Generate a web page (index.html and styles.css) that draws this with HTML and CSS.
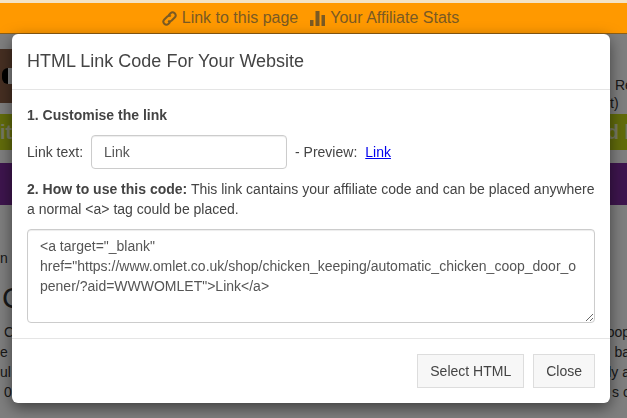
FILE: index.html
```html
<!DOCTYPE html>
<html lang="en">
<head>
	<meta charset="UTF-8">
	<title>HTML Link Code</title>
	<link rel="stylesheet" href="styles.css">
</head>
<body>
	<div class="page">
		<div class="topbar">
			<span class="toplink">
				<svg class="icon" width="17" height="17" viewBox="0 0 17 17"><path d="M7.500 5.500l2-2.200a3 3 0 0 1 4.200 0a3 3 0 0 1 0 4.200l-3 3a3 3 0 0 1-3.600.3M9.500 11.500l-2 2.200a3 3 0 0 1-4.200 0a3 3 0 0 1 0-4.200l3-3a3 3 0 0 1 3.600-.3" fill="none" stroke="currentColor" stroke-width="2"/></svg>
				Link to this page
			</span>
			<span class="toplink">
				<svg class="icon" width="16" height="15" viewBox="0 0 16 15"><path d="M0 9h3.500v6H0zM5.500 0h4v15h-4zM11.500 4H15v11h-3.500z" fill="currentColor"/></svg>
				Your Affiliate Stats
			</span>
		</div>
		<div class="head">
			<div class="logo"><div class="eye"></div></div>
			<div class="headtext"><span class="re">Re</span><br>t)</div>
		</div>
		<div class="band green"><span>it</span><span class="clip">d l</span></div>
		<div class="band purple"></div>
		<div class="crumb">n</div>
		<div class="bigtitle">C</div>
		<div class="copy">
			<p><span>&nbsp;C</span><span class="clip">oop</span></p>
			<p><span>e</span><span class="clip">ba</span></p>
			<p><span>ul</span><span class="clip">ly a</span></p>
			<p><span>&nbsp;0</span><span class="clip">s c</span></p>
		</div>
	</div>
	<div class="backdrop"></div>
	<div class="modal">
		<div class="modal-header">HTML Link Code For Your Website</div>
		<div class="modal-body">
			<p class="step"><b>1. Customise the link</b></p>
			<div class="linkrow">
				<label>Link text:</label>
				<input class="textbox" type="text" value="Link">
				<span>- Preview:</span>
				<a href="#">Link</a>
			</div>
			<p class="howto"><b>2. How to use this code:</b> This link cantains your affiliate code and can be placed anywhere a normal &lt;a&gt; tag could be placed.</p>
			<textarea class="code">&lt;a target="_blank" href="https://www.omlet.co.uk/shop/chicken_keeping/automatic_chicken_coop_door_opener/?aid=WWWOMLET"&gt;Link&lt;/a&gt;</textarea>
		</div>
		<div class="modal-footer">
			<button class="btn">Select HTML</button>
			<button class="btn">Close</button>
		</div>
	</div>
</body>
</html>
```

FILE: styles.css
```css
* {
	margin: 0;
	padding: 0;
	box-sizing: border-box;
}
html,body {
	height: 100%;
	overflow: hidden;
}
body {
	background: #fff;
	color: #333;
	font-family: "Liberation Sans", Arial, sans-serif;
	font-size: 14px;
	line-height: 20px;
}
.topbar {
	position: relative;
	z-index: 2;
	display: flex;
	justify-content: center;
	gap: 12px;
	height: 34px;
	padding-right: 7px;
	background: #ff9900;
	border-top: 3px solid #f3e3c6;
	border-bottom: 1px solid #8f5f14;
	color: #7a5a24;
	font-size: 16px;
	line-height: 30px;
}
.toplink {
	display: flex;
	align-items: center;
	gap: 4px;
}
.head {
	display: flex;
	justify-content: space-between;
	height: 80px;
	padding-top: 15px;
}
.logo {
	display: flex;
	align-items: center;
	justify-content: flex-end;
	width: 13px;
	height: 54px;
	background: #8c5f44;
}
.eye {
	width: 11px;
	height: 16px;
	background: #000;
	border-right: 5px solid #fff;
	border-radius: 6px 0 0 6px;
}
.headtext {
	width: 17px;
	margin-top: 27px;
	line-height: 18px;
	white-space: nowrap;
}
.re {
	margin-left: 5px;
}
.band {
	display: flex;
	justify-content: space-between;
	color: rgba(255,255,255,.75);
	font-size: 20px;
	font-weight: bold;
}
.green {
	height: 36px;
	background: #c4d816;
	line-height: 36px;
}
.purple {
	height: 42px;
	margin-top: 13px;
	background: #7c2a9c;
}
.clip {
	margin-right: -3px;
}
.crumb {
	margin-top: 43px;
}
.bigtitle {
	margin-top: 13px;
	padding-left: 2px;
	font-size: 30px;
	line-height: 34px;
}
.copy {
	margin-top: 7px;
}
.copy p {
	display: flex;
	justify-content: space-between;
	height: 20px;
}
.backdrop {
	position: fixed;
	top: 0;
	right: 0;
	bottom: 0;
	left: 0;
	z-index: 1;
	background: rgba(0,0,0,.5);
}
.modal {
	position: fixed;
	top: 34px;
	left: 12px;
	z-index: 3;
	width: 598px;
	height: 369px;
	background: #fff;
	border-radius: 6px;
	box-shadow: 0 5px 15px rgba(0,0,0,.5);
	color: #444;
}
.modal-header {
	height: 56px;
	padding: 15px;
	border-bottom: 1px solid #e5e5e5;
	font-size: 18px;
	line-height: 24px;
}
.modal-body {
	height: 248px;
	padding: 15px;
}
.step {
	height: 20px;
}
.linkrow {
	display: flex;
	align-items: center;
	height: 34px;
	margin-top: 10px;
	line-height: 18px;
}
.textbox {
	width: 196px;
	height: 34px;
	margin: 0 8px;
	padding: 6px 12px;
	border: 1px solid #ccc;
	border-radius: 4px;
	box-shadow: inset 0 1px 1px rgba(0,0,0,.075);
	color: #555;
	font: 14px "Liberation Sans", Arial, sans-serif;
}
.linkrow a {
	margin-left: 8px;
	color: #0000ee;
}
.howto {
	margin-top: 10px;
}
.code {
	display: block;
	width: 568px;
	height: 94px;
	margin-top: 10px;
	padding: 6px 12px;
	border: 1px solid #ccc;
	border-radius: 4px;
	box-shadow: inset 0 1px 1px rgba(0,0,0,.075);
	color: #555;
	font: 14px/20px "Liberation Sans", Arial, sans-serif;
}
.modal-footer {
	display: flex;
	justify-content: flex-end;
	gap: 9px;
	padding: 15px;
	border-top: 1px solid #e5e5e5;
}
.btn {
	height: 34px;
	padding: 6px 12px;
	background: #f7f7f7;
	border: 1px solid #ddd;
	color: #444;
	font: 14px/20px "Liberation Sans", Arial, sans-serif;
}
```
